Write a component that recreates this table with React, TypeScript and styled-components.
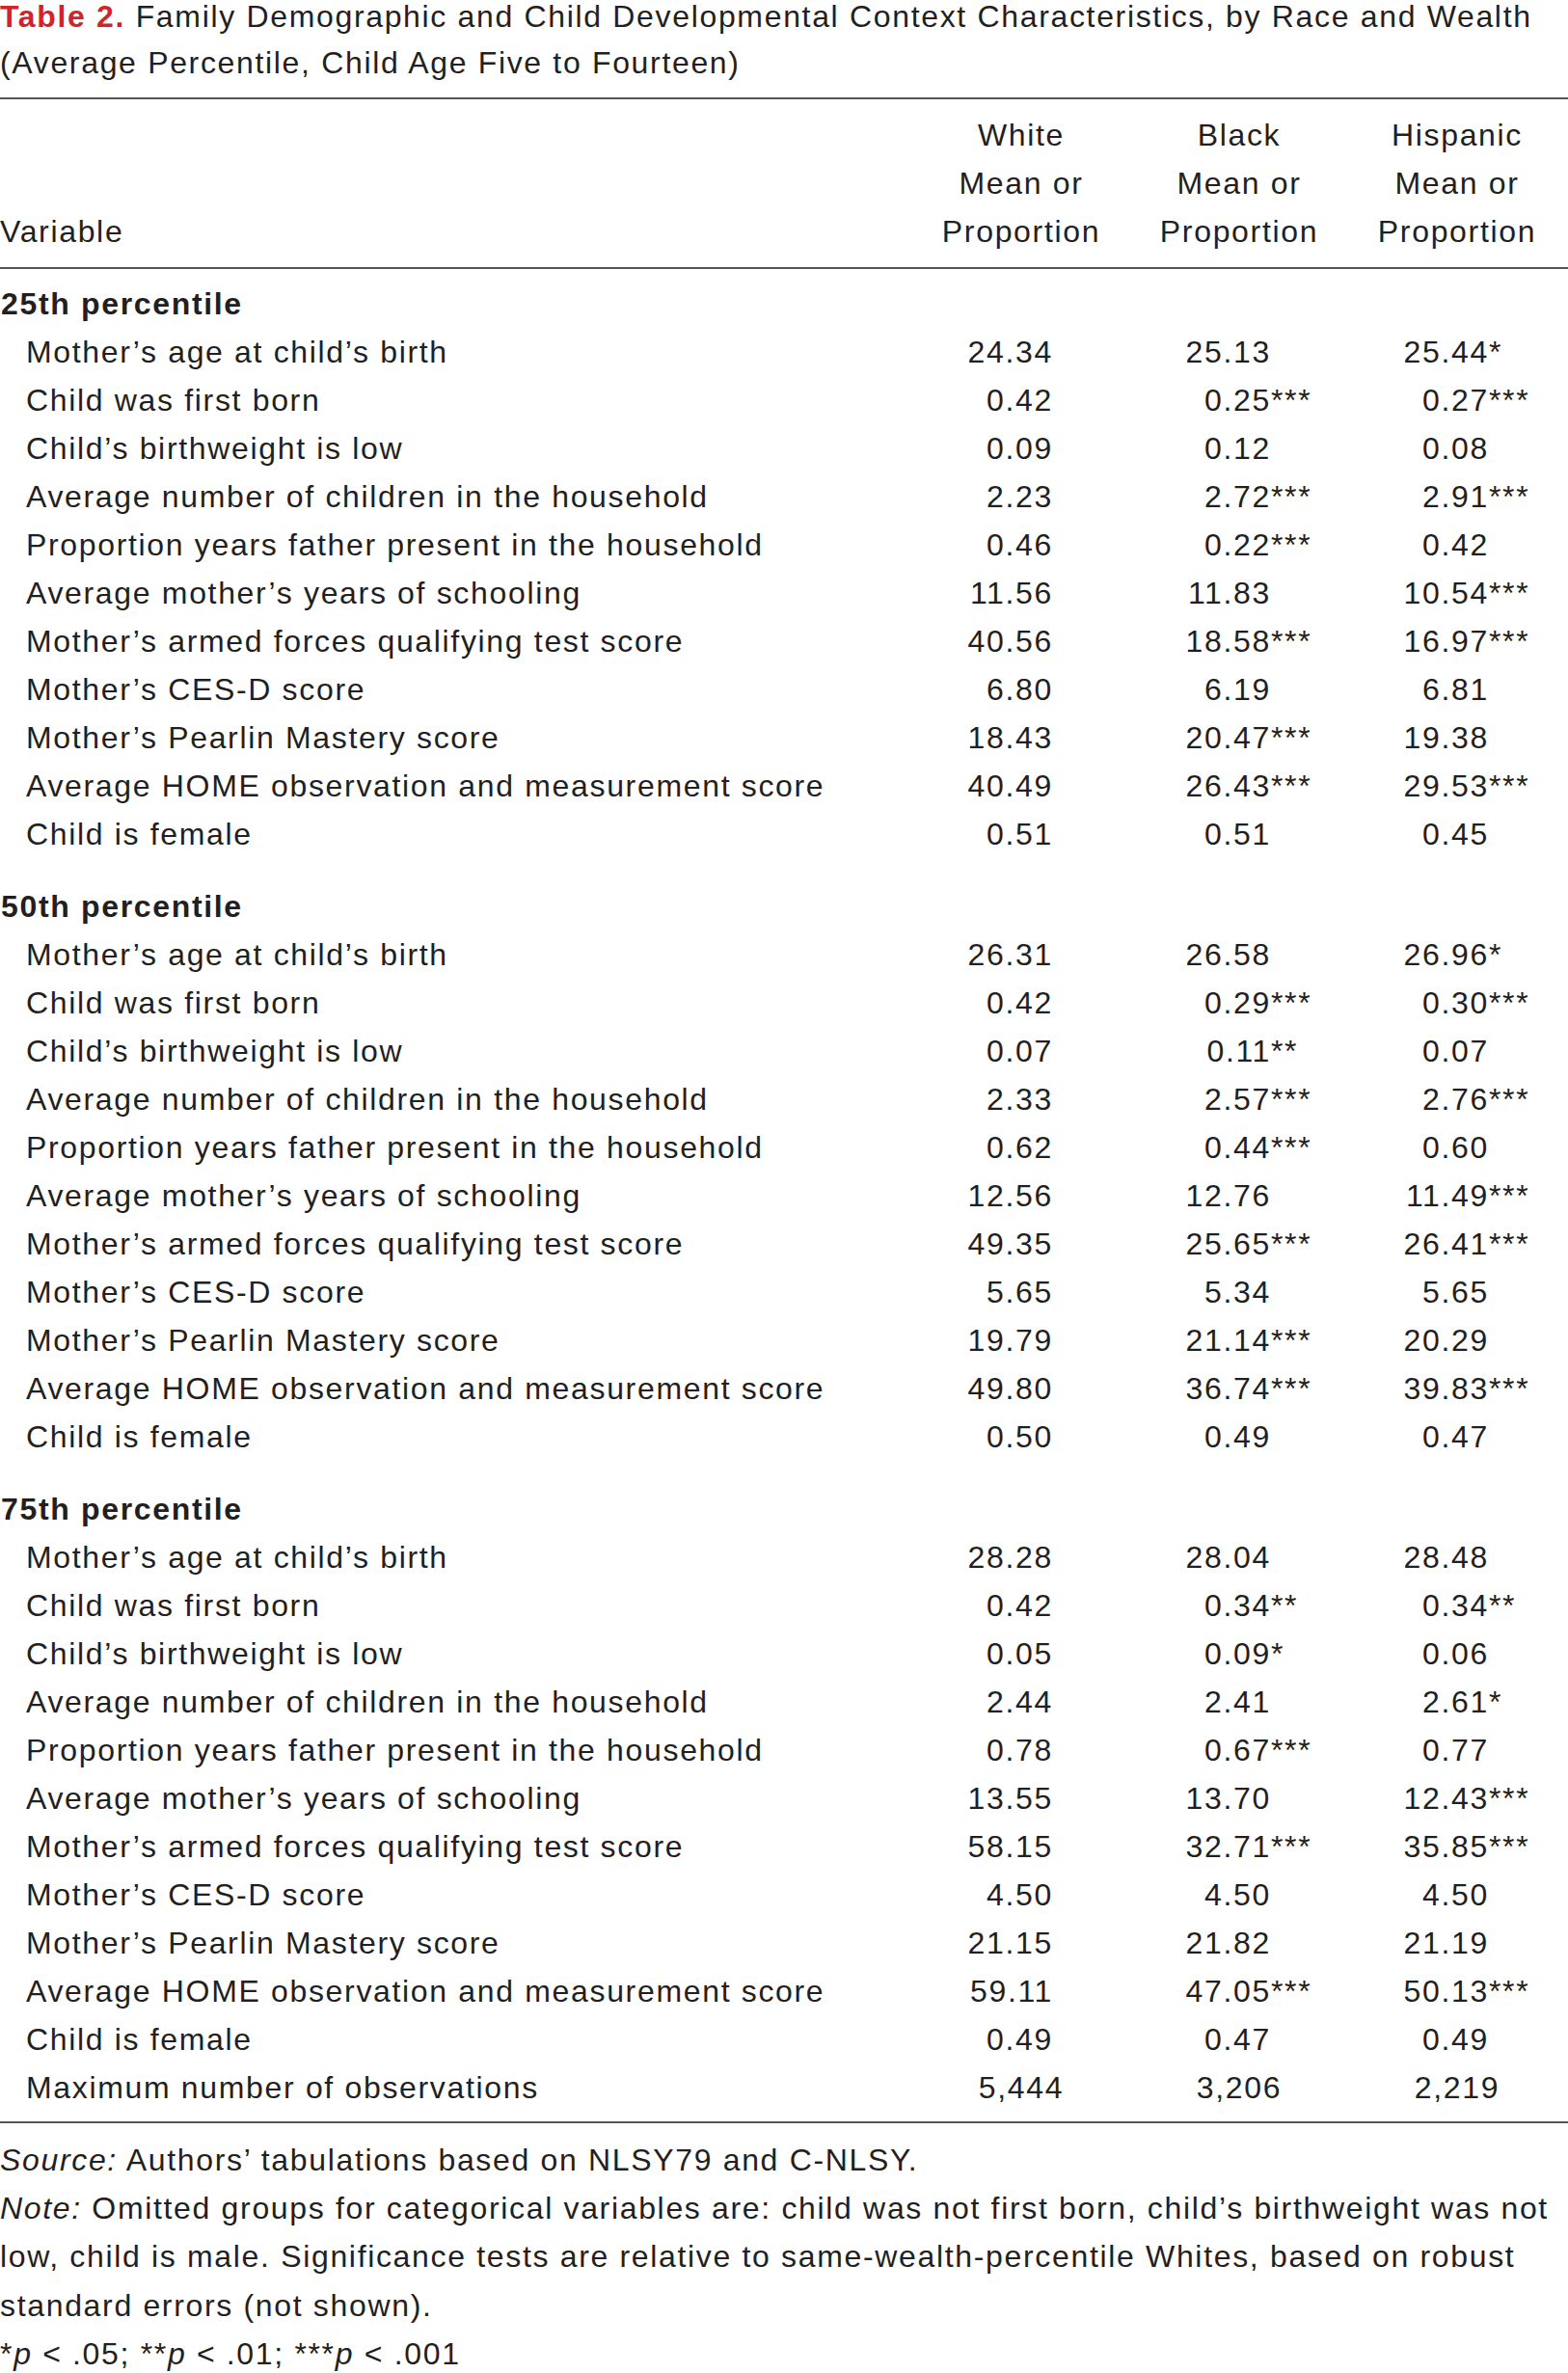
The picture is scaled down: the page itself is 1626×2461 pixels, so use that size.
import React from "react";
import styled, { createGlobalStyle } from "styled-components";

const GlobalStyle = createGlobalStyle`
  html, body {
    margin: 0;
    padding: 0;
    background: #ffffff;
  }
  body {
    font-family: "Liberation Sans", Arial, sans-serif;
    color: #231f20;
  }
`;

const Page = styled.div`
  width: 1626px;
  font-size: 32px;
  letter-spacing: 0.052em;
  overflow: hidden;
`;

const Title = styled.h1`
  margin: 0 0 11px;
  font-size: 32px;
  font-weight: 400;
  letter-spacing: 0.052em;
`;

const TitleLine = styled.span<{ $first?: boolean }>`
  display: block;
  white-space: nowrap;
  line-height: ${(p) => (p.$first ? "34px" : "50px")};
  margin-top: ${(p) => (p.$first ? "0" : "6px")};
`;

const TitleLabel = styled.span`
  color: #d2232a;
  font-weight: 700;
`;

const Rule = styled.hr`
  margin: 0;
  border: 0;
  border-top: 2px solid #555555;
  height: 0;
`;

const Grid = styled.div`
  display: grid;
  grid-template-columns: 1fr repeat(3, 226px);
  padding-right: 2px;
`;

const HeaderGrid = styled(Grid)`
  padding-top: 12px;
  padding-bottom: 12px;
`;

const HeadCell = styled.div`
  text-align: center;
  line-height: 50px;
`;

const VariableHead = styled.div`
  align-self: end;
  line-height: 50px;
`;

const Body = styled.div`
  padding: 11px 0 10px;
`;

const Section = styled.section`
  & + & {
    margin-top: 25px;
  }
`;

const Row = styled(Grid)`
  height: 50px;
  line-height: 50px;
`;

const SectionTitle = styled.div`
  font-weight: 700;
  padding-left: 1px;
  line-height: 50px;
`;

const Label = styled.div`
  padding-left: 27px;
  white-space: nowrap;
`;

const ValueCell = styled.div`
  display: grid;
  grid-template-columns: 1fr 80px;
`;

const Num = styled.span`
  text-align: right;
`;

const Stars = styled.span`
  text-align: left;
`;

const CountCell = styled.div`
  text-align: center;
`;

const Footer = styled.div`
  padding-top: 13px;
  line-height: 50.2px;
  white-space: nowrap;
`;

const Para = styled.p`
  margin: 0;
`;

type Row3 = [string, string, string, string];

const sections: { title: string; rows: Row3[] }[] = [
  {
    title: "25th percentile",
    rows: [
      ["Mother\u2019s age at child\u2019s birth", "24.34", "25.13", "25.44*"],
      ["Child was first born", "0.42", "0.25***", "0.27***"],
      ["Child\u2019s birthweight is low", "0.09", "0.12", "0.08"],
      ["Average number of children in the household", "2.23", "2.72***", "2.91***"],
      ["Proportion years father present in the household", "0.46", "0.22***", "0.42"],
      ["Average mother\u2019s years of schooling", "11.56", "11.83", "10.54***"],
      ["Mother\u2019s armed forces qualifying test score", "40.56", "18.58***", "16.97***"],
      ["Mother\u2019s CES-D score", "6.80", "6.19", "6.81"],
      ["Mother\u2019s Pearlin Mastery score", "18.43", "20.47***", "19.38"],
      ["Average HOME observation and measurement score", "40.49", "26.43***", "29.53***"],
      ["Child is female", "0.51", "0.51", "0.45"],
    ],
  },
  {
    title: "50th percentile",
    rows: [
      ["Mother\u2019s age at child\u2019s birth", "26.31", "26.58", "26.96*"],
      ["Child was first born", "0.42", "0.29***", "0.30***"],
      ["Child\u2019s birthweight is low", "0.07", "0.11**", "0.07"],
      ["Average number of children in the household", "2.33", "2.57***", "2.76***"],
      ["Proportion years father present in the household", "0.62", "0.44***", "0.60"],
      ["Average mother\u2019s years of schooling", "12.56", "12.76", "11.49***"],
      ["Mother\u2019s armed forces qualifying test score", "49.35", "25.65***", "26.41***"],
      ["Mother\u2019s CES-D score", "5.65", "5.34", "5.65"],
      ["Mother\u2019s Pearlin Mastery score", "19.79", "21.14***", "20.29"],
      ["Average HOME observation and measurement score", "49.80", "36.74***", "39.83***"],
      ["Child is female", "0.50", "0.49", "0.47"],
    ],
  },
  {
    title: "75th percentile",
    rows: [
      ["Mother\u2019s age at child\u2019s birth", "28.28", "28.04", "28.48"],
      ["Child was first born", "0.42", "0.34**", "0.34**"],
      ["Child\u2019s birthweight is low", "0.05", "0.09*", "0.06"],
      ["Average number of children in the household", "2.44", "2.41", "2.61*"],
      ["Proportion years father present in the household", "0.78", "0.67***", "0.77"],
      ["Average mother\u2019s years of schooling", "13.55", "13.70", "12.43***"],
      ["Mother\u2019s armed forces qualifying test score", "58.15", "32.71***", "35.85***"],
      ["Mother\u2019s CES-D score", "4.50", "4.50", "4.50"],
      ["Mother\u2019s Pearlin Mastery score", "21.15", "21.82", "21.19"],
      ["Average HOME observation and measurement score", "59.11", "47.05***", "50.13***"],
      ["Child is female", "0.49", "0.47", "0.49"],
    ],
  },
];

const Value: React.FC<{ v: string }> = ({ v }) => {
  const m = v.match(/^([^*]*)(\**)$/);
  const num = m ? m[1] : v;
  const stars = m ? m[2] : "";
  return (
    <ValueCell>
      <Num>{num}</Num>
      <Stars>{stars}</Stars>
    </ValueCell>
  );
};

export default function App() {
  return (
    <>
      <GlobalStyle />
      <Page>
        <Title>
          <TitleLine $first>
            <TitleLabel>Table 2.</TitleLabel> Family Demographic and Child Developmental Context
            Characteristics, by Race and Wealth
          </TitleLine>
          <TitleLine>(Average Percentile, Child Age Five to Fourteen)</TitleLine>
        </Title>
        <Rule />
        <HeaderGrid>
          <VariableHead>Variable</VariableHead>
          <HeadCell>
            White
            <br />
            Mean or
            <br />
            Proportion
          </HeadCell>
          <HeadCell>
            Black
            <br />
            Mean or
            <br />
            Proportion
          </HeadCell>
          <HeadCell>
            Hispanic
            <br />
            Mean or
            <br />
            Proportion
          </HeadCell>
        </HeaderGrid>
        <Rule />
        <Body>
          {sections.map((s, si) => (
            <Section key={s.title}>
              <SectionTitle>{s.title}</SectionTitle>
              {s.rows.map((r) => (
                <Row key={r[0]}>
                  <Label>{r[0]}</Label>
                  <Value v={r[1]} />
                  <Value v={r[2]} />
                  <Value v={r[3]} />
                </Row>
              ))}
              {si === sections.length - 1 && (
                <Row>
                  <Label>Maximum number of observations</Label>
                  <CountCell>5,444</CountCell>
                  <CountCell>3,206</CountCell>
                  <CountCell>2,219</CountCell>
                </Row>
              )}
            </Section>
          ))}
        </Body>
        <Rule />
        <Footer>
          <Para>
            <em>Source:</em> Authors’ tabulations based on NLSY79 and C-NLSY.
          </Para>
          <Para>
            <em>Note:</em> Omitted groups for categorical variables are: child was not first born,
            child’s birthweight was not
            <br />
            low, child is male. Significance tests are relative to same-wealth-percentile Whites,
            based on robust
            <br />
            standard errors (not shown).
          </Para>
          <Para>
            *<em>p</em> &lt; .05; **<em>p</em> &lt; .01; ***<em>p</em> &lt; .001
          </Para>
        </Footer>
      </Page>
    </>
  );
}
